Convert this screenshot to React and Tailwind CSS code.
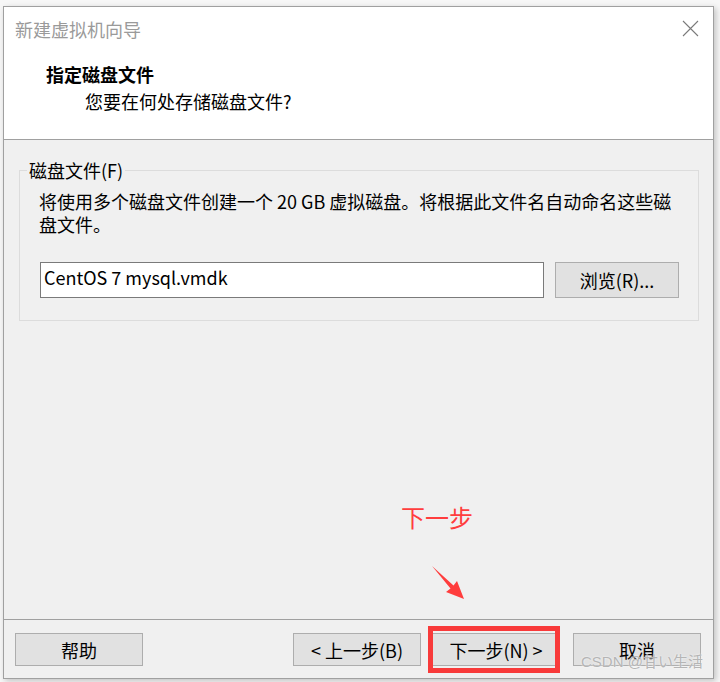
export default function App() {
  return (
    <div className="relative w-[720px] h-[682px] bg-[#f7f7f7] pl-[3px] pt-[6px] font-['Noto_Sans_CJK_SC','Noto_Sans',sans-serif] text-black">
      <div className="w-[711px] h-[673px] border border-[#a0a0a0] bg-[#f0f0f0] flex flex-col shadow-[2px_2px_6px_rgba(0,0,0,0.22)]">
        {/* header */}
        <div className="h-[133px] shrink-0 bg-white border-b border-[#a0a0a0]">
          <div className="flex items-start justify-between">
            <div className="pl-[11px] pt-[11px] text-[18px] leading-[22px] text-[#9a9a9a]">新建虚拟机向导</div>
            <svg className="mt-[13px] mr-[14px]" width="17" height="17" viewBox="0 0 17 17">
              <path d="M1 1 L16 16 M16 1 L1 16" stroke="#7a7a7a" strokeWidth="1.1" fill="none" />
            </svg>
          </div>
          <div className="pl-[42px] mt-[23px] text-[18px] leading-[22px] font-bold">指定磁盘文件</div>
          <div className="pl-[81px] mt-[5px] text-[18px] leading-[22px]">您要在何处存储磁盘文件?</div>
        </div>

        {/* body */}
        <div className="flex-1">
          <fieldset className="ml-[15px] mt-[19px] w-[680px] border border-[#dcdcdc] px-[19px] pt-[9px] pb-[22px]">
            <legend className="-ml-[12px] px-[2px] text-[18px] leading-[22px]">磁盘文件(F)</legend>
            <p className="text-[18px] leading-[23px] whitespace-nowrap">
              将使用多个磁盘文件创建一个 20 GB 虚拟磁盘。将根据此文件名自动命名这些磁
              <br />
              盘文件。
            </p>
            <div className="mt-[26px] ml-[1px] flex gap-[11px]">
              <div className="w-[504px] h-[36px] border border-[#7a7a7a] bg-white pl-[3px] pt-[3px] text-[18px] leading-[22px]">
                CentOS 7 mysql.vmdk
              </div>
              <div className="w-[124px] h-[36px] border border-[#adadad] bg-[#e1e1e1] flex items-center justify-center text-[18px] leading-[22px]">
                浏览(R)...
              </div>
            </div>
          </fieldset>
        </div>

        {/* footer */}
        <div className="h-[59px] shrink-0 border-t border-[#a0a0a0] flex items-start pt-[13px] pl-[11px] pr-[12px]">
          <div className="w-[128px] h-[33px] border border-[#adadad] bg-[#e1e1e1] flex items-center justify-center text-[18px] leading-[22px]">帮助</div>
          <div className="flex-1" />
          <div className="w-[128px] h-[33px] border border-[#adadad] bg-[#e1e1e1] flex items-center justify-center text-[18px] leading-[22px]">&lt; 上一步(B)</div>
          <div className="ml-[11px] w-[128px] h-[33px] border border-[#adadad] bg-[#e1e1e1] flex items-center justify-center text-[18px] leading-[22px]">下一步(N) &gt;</div>
          <div className="ml-[13px] w-[128px] h-[33px] border border-[#adadad] bg-[#e1e1e1] flex items-center justify-center text-[18px] leading-[22px]">取消</div>
        </div>
      </div>

      {/* annotations */}
      <div className="absolute left-[401px] top-[502px] text-[24px] leading-[30px] text-[#ff3d3d]">下一步</div>
      <svg className="absolute left-[425px] top-[560px]" width="50" height="50" viewBox="0 0 50 50">
        <polygon points="7,6 28.5,25.5 32,21 39,39 21,32 25.5,28.5" fill="#ff3d3d" />
      </svg>
      <div className="absolute left-[428px] top-[626px] w-[132px] h-[47px] border-[5px] border-[#f83a3a]" />
      <div className="absolute left-[581px] top-[652px] text-[15px] leading-[20px] text-[#b5b5b5] font-['Liberation_Sans','Noto_Sans_CJK_JP',sans-serif] [text-shadow:0_0_2px_#ffffff]">
        CSDN @甘い生活
      </div>
    </div>
  );
}
